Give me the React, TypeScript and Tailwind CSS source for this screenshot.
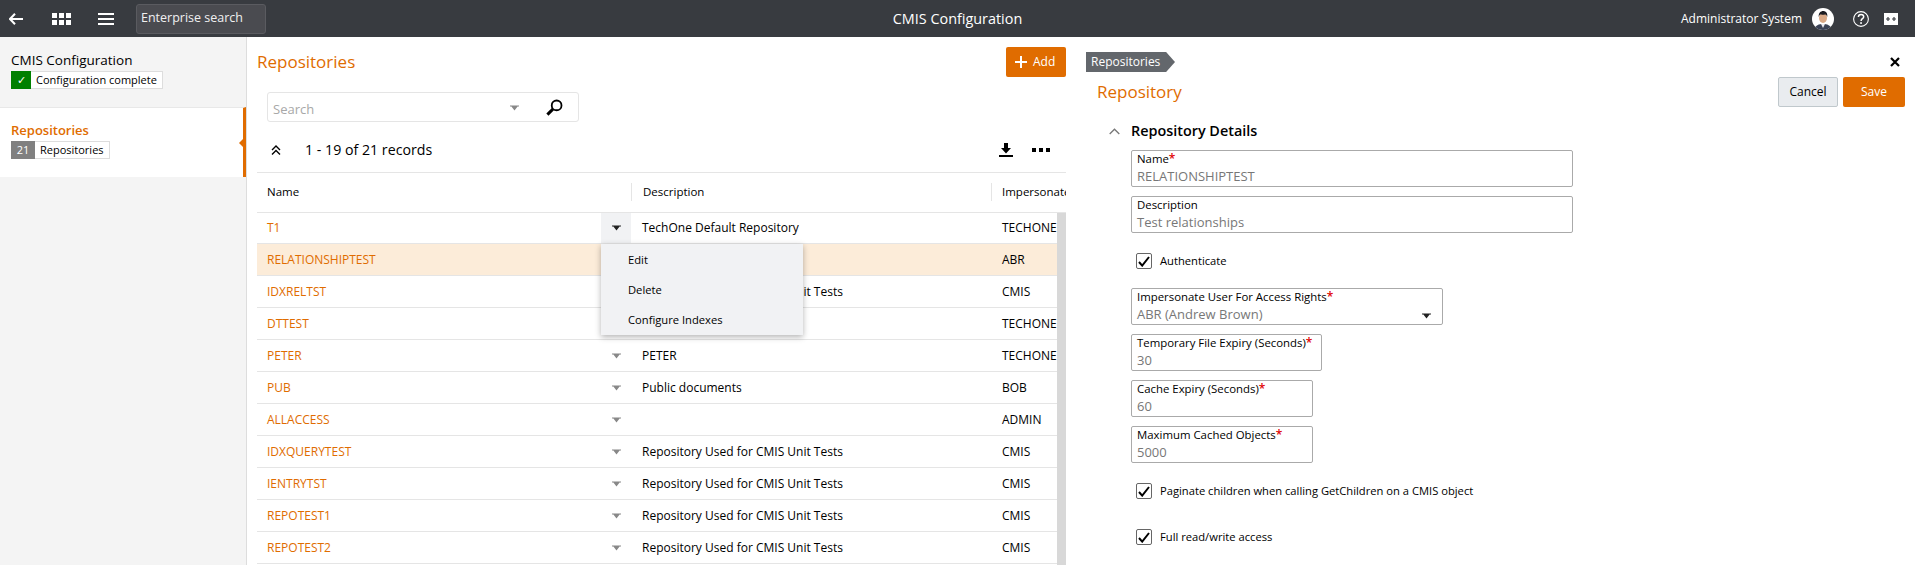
import React from "react";

const Caret = ({ color = "#888" }: { color?: string }) => (
  <svg width="9" height="6" viewBox="0 0 9 6" className="block">
    <path d="M0 0.5h9v1H7.6L4.5 5.5 1.4 1.5H0z" fill={color} />
  </svg>
);

const Check = () => (
  <div className="w-[16px] h-[16px] border border-[#666] rounded-[2px] flex items-center justify-center shrink-0 bg-white">
    <svg width="12" height="11" viewBox="0 0 12 11">
      <path d="M1 6l3.2 3.6L11 1" fill="none" stroke="#000" strokeWidth="2" />
    </svg>
  </div>
);

const Field = ({ label, value, w, req = false, select = false, mt = "mt-[9px]" }: { label: string; value: string; w: string; req?: boolean; select?: boolean; mt?: string }) => (
  <div className={`${w} ${mt} h-[37px] border border-[#aaaaaa] rounded-[2px] px-[5px] relative`}>
    <div className="text-[11.4px] leading-[16px] text-black whitespace-nowrap">
      {label}
      {req && <span className="text-[#e00000] font-semibold text-[12px]">*</span>}
    </div>
    <div className="text-[13px] leading-[18px] text-[#777777] whitespace-nowrap">{value}</div>
    {select && (
      <div className="absolute right-[11px] top-[24px]">
        <Caret color="#222" />
      </div>
    )}
  </div>
);

const CheckRow = ({ label, mt }: { label: string; mt: string }) => (
  <div className={`${mt} flex items-center h-[16px] ml-[5px] gap-[8px] text-[11.2px] text-black whitespace-nowrap`}>
    <Check />
    <span>{label}</span>
  </div>
);

const rows: [string, string, string][] = [
  ["T1", "TechOne Default Repository", "TECHONE"],
  ["RELATIONSHIPTEST", "", "ABR"],
  ["IDXRELTST", "Repository Used for CMIS Unit Tests", "CMIS"],
  ["DTTEST", "", "TECHONE"],
  ["PETER", "PETER", "TECHONE"],
  ["PUB", "Public documents", "BOB"],
  ["ALLACCESS", "", "ADMIN"],
  ["IDXQUERYTEST", "Repository Used for CMIS Unit Tests", "CMIS"],
  ["IENTRYTST", "Repository Used for CMIS Unit Tests", "CMIS"],
  ["REPOTEST1", "Repository Used for CMIS Unit Tests", "CMIS"],
  ["REPOTEST2", "Repository Used for CMIS Unit Tests", "CMIS"],
];

export default function App() {
  return (
    <div className="w-[1915px] h-[565px] overflow-hidden flex flex-col bg-white font-['Open_Sans',sans-serif] text-black">
      {/* top bar */}
      <header className="h-[37px] shrink-0 bg-[#383b40] grid grid-cols-[1fr_auto_1fr] items-center text-white">
        <div className="flex items-center">
          <svg width="14" height="12" viewBox="0 0 14 12" className="ml-[9px]">
            <path d="M6 0.7L1 6l5 5.3M1.2 6H14" fill="none" stroke="#fff" strokeWidth="2" />
          </svg>
          <svg width="19" height="12" viewBox="0 0 19 12" className="ml-[29px]" fill="#fff">
            <rect x="0" y="0" width="5" height="5" />
            <rect x="7" y="0" width="5" height="5" />
            <rect x="14" y="0" width="5" height="5" />
            <rect x="0" y="7" width="5" height="5" />
            <rect x="7" y="7" width="5" height="5" />
            <rect x="14" y="7" width="5" height="5" />
          </svg>
          <svg width="16" height="12" viewBox="0 0 16 12" className="ml-[27px]" fill="#fff">
            <rect x="0" y="0" width="16" height="2" />
            <rect x="0" y="5" width="16" height="2" />
            <rect x="0" y="10" width="16" height="2" />
          </svg>
          <div className="ml-[22px] w-[130px] h-[30px] bg-[#4a4b50] border border-[#5a5b60] rounded-[3px] flex items-center pl-[4px] pb-[1px] text-[12.5px] whitespace-nowrap text-[#f0f0f0]">
            Enterprise search
          </div>
        </div>
        <div className="text-[14.4px] whitespace-nowrap">CMIS Configuration</div>
        <div className="flex items-center justify-end pr-[17px]">
          <span className="text-[12px] whitespace-nowrap">Administrator System</span>
          <svg width="22" height="22" viewBox="0 0 22 22" className="ml-[10px]">
            <defs>
              <clipPath id="av">
                <circle cx="11" cy="11" r="11" />
              </clipPath>
            </defs>
            <g clipPath="url(#av)">
              <rect width="22" height="22" fill="#fff" />
              <path d="M2 22c1-5 5-6 9-6s8 1 9 6z" fill="#3a4256" />
              <path d="M9 16l2 4 2-4z" fill="#e8e8ee" />
              <ellipse cx="11" cy="10" rx="4" ry="5" fill="#d9a987" />
              <path d="M6.8 9c-.6-4 2-6 4.4-6s4.8 2 4 6c-.4-1.6-1-2.4-2-2.6-2 .4-4 .2-5 .2-.8.6-1.2 1.4-1.4 2.4z" fill="#1c1c22" />
            </g>
          </svg>
          <svg width="16" height="16" viewBox="0 0 16 16" className="ml-[19px]">
            <circle cx="8" cy="8" r="7.4" fill="none" stroke="#fff" strokeWidth="1.1" />
            <path d="M5.4 6c0-1.7 1.2-2.6 2.7-2.6s2.6 1 2.6 2.3c0 2-2.6 2-2.6 4.2" fill="none" stroke="#fff" strokeWidth="1.5" />
            <rect x="7.2" y="11.2" width="1.7" height="1.7" fill="#fff" />
          </svg>
          <svg width="14" height="12" viewBox="0 0 14 12" className="ml-[15px]">
            <rect width="14" height="12" fill="#fff" />
            <path d="M2 6h4M4 4v4M8 6h4M10 4v4" stroke="#383b40" strokeWidth="1.2" />
          </svg>
        </div>
      </header>

      <div className="flex flex-1 min-h-0">
        {/* sidebar */}
        <aside className="w-[247px] shrink-0 bg-[#f4f4f4] border-r border-[#dddddd]">
          <div className="h-[70px] pl-[11px] pt-[14px]">
            <div className="text-[13.5px] leading-[18px] whitespace-nowrap font-medium">CMIS Configuration</div>
            <div className="mt-[2px] flex h-[18px] w-fit border border-[#dddddd] bg-white text-[11px] leading-[16px] whitespace-nowrap">
              <div className="w-[20px] -my-px -ml-px bg-[#008000] text-white flex items-center justify-center text-[11px]">✓</div>
              <div className="px-[5px]">Configuration complete</div>
            </div>
          </div>
          <div className="relative h-[70px] bg-white border-r-[3px] border-t border-t-[#e8e8e8] border-r-[#e06c00] pl-[11px] pt-[13px]">
            <div className="text-[13px] leading-[18px] whitespace-nowrap font-semibold text-[#e06c00]">Repositories</div>
            <div className="mt-[2px] flex h-[18px] w-fit border border-[#dddddd] bg-white text-[11px] leading-[16px] whitespace-nowrap">
              <div className="w-[24px] -my-px -ml-px bg-[#808080] text-white flex items-center justify-center">21</div>
              <div className="px-[5px]">Repositories</div>
            </div>
            <div className="absolute right-0 top-[31px] w-0 h-0 border-y-[4px] border-y-transparent border-r-[4px] border-r-[#e06c00]" />
          </div>
        </aside>

        {/* main list */}
        <main className="w-[819px] shrink-0 pl-[10px] flex flex-col min-h-0">
          <div className="mt-[10px] h-[30px] flex items-center justify-between">
            <h1 className="text-[17px] text-[#e06c00]">Repositories</h1>
            <button className="w-[60px] h-[30px] bg-[#e06c00] rounded-[2px] flex items-center pl-[9px] gap-[6px] text-white text-[12px]">
              <svg width="12" height="12" viewBox="0 0 12 12">
                <path d="M6 0v12M0 6h12" stroke="#fff" strokeWidth="2" />
              </svg>
              Add
            </button>
          </div>
          <div className="mt-[15px] ml-[10px] w-[312px] h-[30px] border border-[#e5e5e5] rounded-[3px] flex items-center relative pl-[5px]">
            <span className="text-[13px] text-[#a8a8a8] mt-[5px]">Search</span>
            <div className="absolute left-[242px] top-[12px]">
              <Caret color="#888" />
            </div>
            <svg width="17" height="17" viewBox="0 0 16 16" className="absolute left-[278px] top-[6px]">
              <circle cx="10" cy="6" r="4.6" fill="none" stroke="#000" strokeWidth="1.7" />
              <path d="M6.5 9.5L1.3 14.7" stroke="#000" strokeWidth="2.8" />
            </svg>
          </div>
          <div className="h-[51px] shrink-0 border-b border-[#e5e5e5] flex items-center pt-[5px] pl-[14px] pr-[16px]">
            <svg width="10" height="10" viewBox="0 0 10 10">
              <path d="M1 5l4-4 4 4M1 9.5l4-4 4 4" fill="none" stroke="#000" strokeWidth="1.4" />
            </svg>
            <span className="ml-[24px] text-[14.2px] whitespace-nowrap">1 - 19 of 21 records</span>
            <div className="ml-auto flex items-center">
              <svg width="14" height="14" viewBox="0 0 14 14">
                <path d="M5 0h4v5h3L7 10.5 2 5h3z M0 12h14v2H0z" fill="#000" />
              </svg>
              <div className="ml-[19px] flex gap-[3px]">
                <div className="w-[4px] h-[4px] bg-black" />
                <div className="w-[4px] h-[4px] bg-black" />
                <div className="w-[4px] h-[4px] bg-black" />
              </div>
            </div>
          </div>
          <div className="h-[40px] shrink-0 border-b border-[#e5e5e5] grid grid-cols-[374px_360px_75px] items-center text-[11.5px] pb-[2px]">
            <div className="pl-[10px]">Name</div>
            <div className="pl-[11px] h-[18px] leading-[18px] border-l border-[#e5e5e5]">Description</div>
            <div className="pl-[10px] h-[18px] leading-[18px] border-l border-[#e5e5e5] overflow-hidden whitespace-nowrap">Impersonate User</div>
          </div>
          <div className="flex-1 min-h-0 flex relative">
            <div className="w-[800px]">
              {rows.map(([n, d, u], i) => (
                <div
                  key={n}
                  className={`${i === 0 ? "h-[31px]" : "h-[32px]"} ${i === 1 ? "bg-[#fcecd9]" : ""} border-b border-[#e5e5e5] grid grid-cols-[344px_30px_360px_66px] items-center text-[12px]`}
                >
                  <div className="pl-[10px] text-[#e06c00] whitespace-nowrap">{n}</div>
                  <div className={`h-full flex items-center justify-center ${i === 0 ? "bg-[#f1f2f4]" : ""}`}>
                    <Caret color={i === 0 ? "#222" : "#888"} />
                  </div>
                  <div className="pl-[11px] whitespace-nowrap">{d}</div>
                  <div className="pl-[11px] whitespace-nowrap overflow-hidden">{u}</div>
                </div>
              ))}
            </div>
            <div className="w-[9px] bg-[#d8d8d8]" />
            <div className="absolute left-[344px] top-[31px] w-[202px] h-[91px] bg-[#f1f2f4] shadow-[0_2px_6px_rgba(0,0,0,0.3)] flex flex-col text-[11.2px] pl-[27px] pt-[1px]">
              <div className="h-[30px] leading-[30px]">Edit</div>
              <div className="h-[30px] leading-[30px]">Delete</div>
              <div className="h-[30px] leading-[30px]">Configure Indexes</div>
            </div>
          </div>
        </main>

        {/* right panel */}
        <section className="flex-1 min-w-0 flex flex-col">
          <div className="mt-[15px] h-[20px] flex items-center justify-between pl-[20px] pr-[15px]">
            <div className="h-[20px] w-[89px] bg-[#63676c] text-white text-[12px] leading-[20px] pl-[5px] [clip-path:polygon(0_0,90%_0,100%_50%,90%_100%,0_100%)]">
              Repositories
            </div>
            <svg width="10" height="10" viewBox="0 0 10 10">
              <path d="M1 1l8 8M9 1l-8 8" stroke="#000" strokeWidth="2.2" />
            </svg>
          </div>
          <div className="mt-[5px] h-[30px] flex items-center justify-between pl-[31px] pr-[10px]">
            <h2 className="text-[17px] text-[#e06c00]">Repository</h2>
            <div className="flex gap-[5px]">
              <button className="w-[60px] h-[30px] bg-[#e9ecef] border border-[#c0c8cc] rounded-[2px] text-[12px]">Cancel</button>
              <button className="w-[62px] h-[30px] bg-[#e06c00] rounded-[2px] text-[12px] text-white">Save</button>
            </div>
          </div>
          <div className="mt-[14px] h-[20px] flex items-center pl-[43px]">
            <svg width="11" height="7" viewBox="0 0 11 7">
              <path d="M0.7 6L5.5 1.2 10.3 6" fill="none" stroke="#777" strokeWidth="1.3" />
            </svg>
            <span className="ml-[11px] text-[14.4px] font-semibold whitespace-nowrap">Repository Details</span>
          </div>
          <div className="pl-[65px]">
            <Field label="Name" value="RELATIONSHIPTEST" w="w-[442px]" req />
            <Field label="Description" value="Test relationships" w="w-[442px]" />
            <CheckRow label="Authenticate" mt="mt-[20px]" />
            <Field label="Impersonate User For Access Rights" value="ABR (Andrew Brown)" w="w-[312px]" req select mt="mt-[19px]" />
            <Field label="Temporary File Expiry (Seconds)" value="30" w="w-[191px]" req />
            <Field label="Cache Expiry (Seconds)" value="60" w="w-[182px]" req />
            <Field label="Maximum Cached Objects" value="5000" w="w-[182px]" req />
            <CheckRow label="Paginate children when calling GetChildren on a CMIS object" mt="mt-[20px]" />
            <CheckRow label="Full read/write access" mt="mt-[30px]" />
          </div>
        </section>
      </div>
    </div>
  );
}
